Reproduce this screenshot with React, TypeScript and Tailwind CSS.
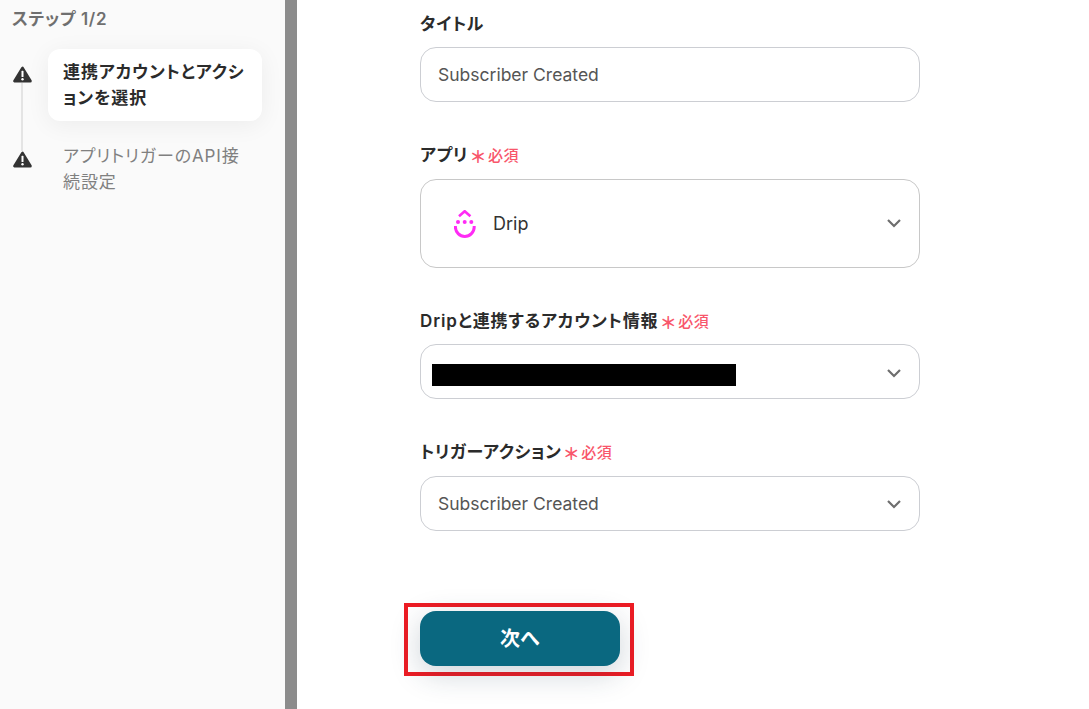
const fontFamily = 'font-["Inter","Noto_Sans_CJK_JP",sans-serif]';

const WarnIcon = () => (
  <svg width="19" height="17" viewBox="0 0 19 17" className="shrink-0">
    <path
      d="M9.5 2.200L1.700 15h15.600z"
      fill="#333333"
      stroke="#333333"
      strokeWidth="3"
      strokeLinejoin="round"
    />
    <rect x="8.500" y="4.800" width="2" height="6.200" rx="0.600" fill="#ffffff" />
    <circle cx="9.500" cy="13.200" r="1.200" fill="#ffffff" />
  </svg>
);

const Chevron = ({ className = "" }: { className?: string }) => (
  <svg width="16" height="10" viewBox="0 0 16 10" className={`shrink-0 ${className}`} fill="none">
    <path d="M2 2l6 6 6-6" stroke="#6e6e6e" strokeWidth="2.200" />
  </svg>
);

const DripLogo = () => (
  <svg width="22" height="28" viewBox="0 0 22 28" fill="none">
    <path d="M5 6.200L10.700 1.200l5.700 5" stroke="#ff2bf5" strokeWidth="2.600" />
    <circle cx="4" cy="12" r="2" fill="#ff2bf5" />
    <circle cx="10.700" cy="12" r="2" fill="#ff2bf5" />
    <circle cx="17.300" cy="12" r="2" fill="#ff2bf5" />
    <path d="M1.400 16v1a9.400 9.400 0 0 0 18.800 0v-1" stroke="#ff2bf5" strokeWidth="3" />
  </svg>
);

const Label = ({
  text,
  required,
  tracking = "tracking-[0.6px]",
}: {
  text: string;
  required?: boolean;
  tracking?: string;
}) => (
  <div className={`flex h-6 items-center pt-[2px] text-[17px] font-semibold text-[#2b2b2b] [font-feature-settings:'palt'] ${tracking}`}>
    {text}
    {required && (
      <>
        <span className="ml-[3px] text-[17px] font-bold leading-none tracking-normal text-[#f8566b] relative top-[1px]">＊</span>
        <span className="ml-[3px] text-[15px] font-medium tracking-[0.5px] text-[#f8566b]">必須</span>
      </>
    )}
  </div>
);

export default function App() {
  return (
    <div className={`${fontFamily} flex h-[709px] w-[1089px] overflow-hidden bg-white`}>
      <aside className="w-[285px] shrink-0 bg-[#fafafa] pt-[7px] tracking-[0.9px] [font-feature-settings:'palt']">
        <p className="pl-3 text-[17px] leading-6 font-semibold tracking-[0.6px] text-[#6f6f6f]">ステップ 1/2</p>
        <div className="mt-[18px] flex">
          <div className="ml-[13px] flex w-[35px] flex-col pt-[17px]">
            <WarnIcon />
            <div className="ml-2 h-[68px] w-[2px] bg-[#e4e4e4]" />
            <WarnIcon />
          </div>
          <div className="w-[214px]">
            <div className="rounded-xl bg-white px-[15px] py-[10px] text-[17px] leading-[26px] font-semibold text-[#2b2b2b] shadow-[0_4px_24px_rgba(0,0,0,0.06)]">
              連携アカウントとアクションを選択
            </div>
            <div className="mt-[22px] px-[15px] text-[17px] leading-[26px] text-[#808080]">
              アプリトリガーのAPI接続設定
            </div>
          </div>
        </div>
      </aside>

      <div className="w-3 shrink-0 bg-[#8c8c8c]" />

      <main className="pl-[123px] pt-3">
        <div className="w-[500px]">
          <Label text="タイトル" />
          <div className="mt-[11px] flex h-[55px] items-center rounded-2xl border border-[#ccced3] px-[17px] pt-[2px] text-[17.5px] text-[#555555]">
            Subscriber Created
          </div>

          <div className="mt-[41px]">
            <Label text="アプリ" required />
          </div>
          <div className="mt-3 flex h-[89px] items-center justify-between rounded-2xl border border-[#c8c8c8] pl-[33px] pr-[17px]">
            <div className="flex items-center gap-[17px] text-[18px] text-[#333333]">
              <DripLogo />
              <span>Drip</span>
            </div>
            <Chevron className="mb-[2px]" />
          </div>

          <div className="mt-[41px]">
            <Label text="Dripと連携するアカウント情報" required tracking="tracking-[0.85px]" />
          </div>
          <div className="mt-[11px] flex h-[55px] items-start justify-between rounded-2xl border border-[#ccced3] pl-[11px] pr-[17px]">
            <div className="mt-[19px] h-[22px] w-[304px] bg-black" />
            <Chevron className="mt-[23px]" />
          </div>

          <div className="mt-[41px]">
            <Label text="トリガーアクション" required />
          </div>
          <div className="mt-3 flex h-[55px] items-center justify-between rounded-2xl border border-[#ccced3] px-[17px] text-[17.5px] text-[#555555]">
            <span className="pt-[2px]">Subscriber Created</span>
            <Chevron />
          </div>
        </div>

        <div className="-ml-4 mt-[72px] w-[230px] border-4 border-[#ed1c24] pb-[6px] pl-3 pr-[10px] pt-1">
          <button className="h-[55px] w-[200px] rounded-2xl bg-[#0a6880] text-[20px] font-bold text-white shadow-[0_8px_30px_rgba(30,60,80,0.22)]">
            次へ
          </button>
        </div>
      </main>
    </div>
  );
}
